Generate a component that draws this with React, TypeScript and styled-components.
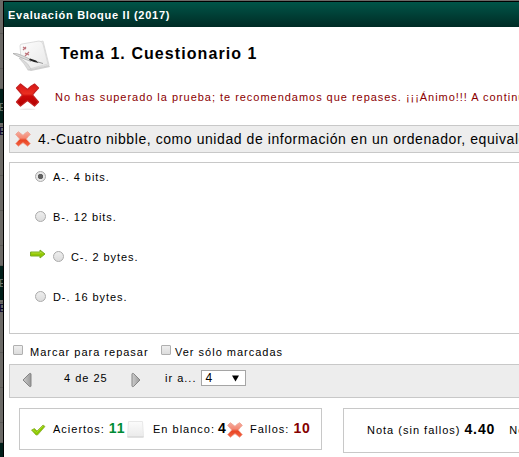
import React, { useState } from "react";
import styled, { createGlobalStyle } from "styled-components";

const GlobalStyle = createGlobalStyle`
  * { box-sizing: border-box; }
  html, body { margin: 0; padding: 0; overflow: hidden; }
  body { font-family: "Liberation Sans", Arial, sans-serif; font-size: 11px; letter-spacing: 1px; color: #000; }
`;

const Screen = styled.div`
  width: 519px;
  height: 457px;
  display: flex;
  padding-top: 1px;
  background: #6b6966;
  overflow: hidden;
`;

const Backdrop = styled.div`
  flex: 0 0 3px;
  display: flex;
  flex-direction: column;
  overflow: hidden;
`;

const BackdropBlock = styled.div<{ $h: number; $dark?: boolean }>`
  flex: 0 0 ${(p) => p.$h}px;
  background: ${(p) => (p.$dark ? "#001f1a" : "#6b6966")};
  border-bottom: ${(p) => (p.$dark ? "0" : "1px solid #5b5a57")};
`;

const BackdropLetter = styled.div<{ $light?: boolean }>`
  flex: 0 0 11px;
  font-size: 11px;
  line-height: 11px;
  text-indent: -1px;
  background: ${(p) => (p.$light ? "#001f1a" : "#6b6966")};
  color: ${(p) => (p.$light ? "#73786f" : "#00002b")};
`;

const Dialog = styled.main`
  flex: 1;
  min-width: 0;
  border-left: 1px solid #000;
  border-top: 1px solid #000;
  background: #fff;
  overflow: hidden;
  white-space: nowrap;
`;

const TitleBar = styled.header`
  height: 25px;
  padding: 0 4px;
  line-height: 27px;
  font-weight: bold;
  letter-spacing: 0.73px;
  color: #fff;
  background: linear-gradient(#005548, #002b25);
`;

const Heading = styled.div`
  height: 54px;
  padding: 13px 0 0 8px;
  display: flex;
  gap: 10px;
`;

const Title = styled.h1`
  margin: 5px 0 0;
  font-size: 16px;
  line-height: 18px;
  letter-spacing: 1.07px;
`;

const Message = styled.div`
  height: 44px;
  padding: 1px 0 0 10px;
  display: flex;
  gap: 14px;
  color: #8b0000;
  line-height: 31px;
  letter-spacing: 0.97px;
`;

const Question = styled.section`
  height: 28px;
  width: 600px;
  margin-left: 5px;
  padding-left: 5px;
  display: flex;
  align-items: center;
  gap: 7px;
  border: 1px solid #c8c8c8;
  background: #ededed;
  font-size: 14px;
  letter-spacing: 0.57px;
  line-height: 26px;
`;

const Answers = styled.section`
  height: 172px;
  width: 600px;
  margin: 9px 0 0 5px;
  padding: 7px 0 0 24px;
  border: 1px solid #c8c8c8;
`;

const Answer = styled.label<{ $marked?: boolean }>`
  height: 40px;
  display: flex;
  align-items: flex-start;
  margin-left: ${(p) => (p.$marked ? "-4px" : "0")};
  line-height: 15px;
  letter-spacing: 0.93px;
`;

const Radio = styled.input`
  appearance: none;
  width: 11px;
  height: 11px;
  margin: 1px 7px 0 1px;
  border: 1px solid #aaa;
  border-radius: 50%;
  background: linear-gradient(#eee, #dcdcdc);
  &:checked { background: radial-gradient(circle, #606060 0 2.3px, #e7e7e7 3px); }
`;

const Options = styled.div`
  height: 30px;
  padding: 11px 0 0 9px;
  display: flex;
  line-height: 15px;
`;

const CheckLabel = styled.label<{ $gap: number; $w: number }>`
  display: flex;
  gap: ${(p) => p.$gap}px;
  flex: 0 0 ${(p) => p.$w}px;
`;

const Check = styled.input`
  appearance: none;
  width: 10px;
  height: 10px;
  margin: 0;
  border: 1px solid #b0b0b0;
  border-radius: 1px;
  background: linear-gradient(#eee, #dcdcdc);
  &:checked { background: #666; }
`;

const Pager = styled.nav`
  height: 34px;
  width: 600px;
  margin-left: 5px;
  padding: 5px 0 0 12px;
  display: flex;
  border: 1px solid #c8c8c8;
  background: #ededed;
  line-height: 17px;
`;

const PageButton = styled.button`
  width: 10px;
  height: 16px;
  margin-top: 2px;
  padding: 0;
  border: 0;
  background: none;
  display: block;
`;

const PageCount = styled.span`
  width: 99px;
  padding-left: 32px;
`;

const Jump = styled.div`
  display: flex;
  margin-left: 24px;
  gap: 5px;
`;

const JumpBox = styled.button`
  width: 45px;
  height: 16px;
  padding: 0 6px 0 3px;
  display: flex;
  align-items: center;
  justify-content: space-between;
  border: 1px solid #a5a5a5;
  background: #fff;
  font: 12px "Liberation Sans", Arial, sans-serif;
  color: #000;
`;

const Results = styled.footer`
  display: flex;
  align-items: flex-start;
  gap: 21px;
  padding: 10px 0 0 15px;
`;

const ScoreBox = styled.div`
  width: 303px;
  height: 42px;
  padding: 12px 0 0 11px;
  display: flex;
  flex: none;
  border: 1px solid #c8c8c8;
  line-height: 17px;
`;

const GradeBox = styled.div`
  width: 300px;
  height: 45px;
  padding: 12px 0 0 23px;
  display: flex;
  flex: none;
  gap: 14px;
  border: 1px solid #c8c8c8;
  line-height: 18px;
`;

const Stat = styled.div<{ $w: number; $gap: number }>`
  width: ${(p) => p.$w}px;
  display: flex;
  flex: none;
  gap: ${(p) => p.$gap}px;
`;

const Value = styled.b<{ $color?: string; $left?: number }>`
  color: ${(p) => p.$color ?? "#000"};
  font-size: 14px;
  line-height: 15px;
  letter-spacing: 0.9px;
  margin-left: ${(p) => p.$left ?? 4}px;
`;

const Icon = styled.svg<{ $top?: number }>`
  display: block;
  flex: none;
  margin-top: ${(p) => p.$top ?? 0}px;
`;

const PapersIcon = () => (
  <Icon width="38" height="32" viewBox="0 0 38 32">
    <defs>
      <linearGradient id="sheet" x2="1" y2="1">
        <stop stopColor="#fdfdfd" /><stop offset="1" stopColor="#e8e8e8" />
      </linearGradient>
    </defs>
    <path d="M15 30 37 25l1 2-19 4z" fill="#cfcfcf" />
    <path d="M13 6 31 1l6 24-19 4z" fill="#f4f4f4" stroke="#cdcdcd" strokeWidth=".7" />
    <path d="M8 6q0-2 2-2l17-3q3 0 4 3l5 20-19 5q-1-5-8-10z" fill="url(#sheet)" stroke="#d0d0d0" strokeWidth=".7" />
    <path d="m11 7 3 2m0-2-3 3m2 3 4 2m0-3-4 4" stroke="#bd737b" strokeWidth="1.200" />
    <path d="M7 18q5 5 9 12l3-1q-3-6-8-9z" fill="#dcdcdc" stroke="#bbb" strokeWidth=".5" />
    <path d="M1 13.500q4-.5 9 2l10 4.500-1 1.500-9-3.500Q5 16 1 13.500z" fill="#ddd" stroke="#999" strokeWidth=".6" />
    <path d="m18 18.500 6 2 3 2.500-5-1-5-2z" fill="#222" />
    <path d="m26 22 5 1.500" stroke="#999" />
  </Icon>
);

const CROSS = "M1 5 5 1l7 5.500Q15 3 19 1l4 4q-3 3-6 7l6 7-4 4-7-5.500-7 5.500-4-4 6-7z";

const BigCross = () => (
  <Icon width="27" height="29" viewBox="0 0 27 29">
    <defs>
      <linearGradient id="red" x2="0" y2="1">
        <stop stopColor="#d91616" /><stop offset=".45" stopColor="#ea2e20" />
        <stop offset=".55" stopColor="#cc0909" /><stop offset="1" stopColor="#b00000" />
      </linearGradient>
    </defs>
    <ellipse cx="13.500" cy="27.300" rx="8" ry=".8" fill="#e9e9e9" />
    <path d={CROSS} transform="translate(1.500 1)" fill="url(#red)" stroke="#c42020" strokeWidth="1.200" strokeLinejoin="round" />
  </Icon>
);

const SmallCross = ({ top = 0 }: { top?: number }) => (
  <Icon $top={top} width="16" height="16" viewBox="0 0 24 24">
    <defs>
      <linearGradient id="coral" x2="0" y2="1">
        <stop stopColor="#f5ac9e" /><stop offset=".43" stopColor="#f48873" />
        <stop offset=".58" stopColor="#e84423" /><stop offset="1" stopColor="#f46545" />
      </linearGradient>
    </defs>
    <path d={CROSS} fill="url(#coral)" stroke="#efa191" strokeWidth="1.300" strokeLinejoin="round" />
  </Icon>
);

const ArrowIcon = () => (
  <Icon width="16" height="10" viewBox="0 0 16 10">
    <path d="M.5 3h9.500V1l5 4-5 4V7H.5z" fill="#93c800" stroke="#79ac25" strokeLinejoin="round" />
    <path d="M1.500 4h9V3l2 1.500" fill="none" stroke="#bde34f" strokeWidth=".7" />
  </Icon>
);

const TickIcon = () => (
  <Icon $top={2} width="15" height="14" viewBox="0 0 15 14">
    <path d="m.5 7 3-1.500L6 8l6-6 2 1.500L6.500 12H5z" fill="#8ac800" stroke="#8eaf37" strokeWidth=".8" />
    <path d="m2 7 3.500 2.500L12 3" fill="none" stroke="#a9dc28" />
  </Icon>
);

const BlankIcon = () => (
  <Icon width="17" height="17" viewBox="0 0 17 17">
    <defs><linearGradient id="blank" x2="0" y2="1"><stop stopColor="#fcfcfc" /><stop offset="1" stopColor="#eaeaea" /></linearGradient></defs>
    <path d="M1.500.5h14l1 15.500H.5z" fill="url(#blank)" stroke="#e8e8e8" />
    <path d="M.5 16h16" stroke="#cfcfcf" />
  </Icon>
);

const Triangle = ({ back = false }: { back?: boolean }) => (
  <Icon width="10" height="16" viewBox="0 0 10 16">
    <defs><linearGradient id="steel"><stop stopColor="#ccc" /><stop offset="1" stopColor="#999" /></linearGradient></defs>
    <path d={back ? "M7.500 1.500Q9 1 9 2v12q0 1-1.500.5L1 8z" : "M2.500 1.500Q1 1 1 2v12q0 1 1.500.5L9 8z"}
      fill="url(#steel)" stroke="#858585" strokeLinejoin="round" />
  </Icon>
);

const answers = ["A-. 4 bits.", "B-. 12 bits.", "C-. 2 bytes.", "D-. 16 bytes."];

const Arrow = styled.span`
  display: block;
  width: 22px;
  flex: none;
  margin-top: -1px;
`;

const App: React.FC = () => {
  const [selected, setSelected] = useState(0);
  return (
    <>
      <GlobalStyle />
      <Screen>
        <Backdrop aria-hidden="true">
          <BackdropBlock $h={33} />
          <BackdropBlock $h={35} />
          <BackdropBlock $h={20} />
          <BackdropBlock $h={13} $dark />
          <BackdropLetter $light>E</BackdropLetter>
          <BackdropBlock $h={10} $dark />
          <BackdropBlock $h={3} />
          <BackdropLetter>E</BackdropLetter>
          <BackdropBlock $h={39} />
          <BackdropBlock $h={35} />
          <BackdropBlock $h={35} />
          <BackdropBlock $h={20} />
          <BackdropBlock $h={12} $dark />
          <BackdropLetter $light>E</BackdropLetter>
          <BackdropBlock $h={11} $dark />
          <BackdropBlock $h={3} />
          <BackdropLetter>E</BackdropLetter>
          <BackdropBlock $h={39} />
          <BackdropBlock $h={35} />
          <BackdropBlock $h={35} />
          <BackdropBlock $h={20} />
          <BackdropBlock $h={14} $dark />
        </Backdrop>
        <Dialog>
          <TitleBar>Evaluación Bloque II (2017)</TitleBar>
          <Heading><PapersIcon /><Title>Tema 1. Cuestionario 1</Title></Heading>
          <Message><BigCross /><span>No has superado la prueba; te recomendamos que repases. ¡¡¡Ánimo!!! A continuación</span></Message>
          <Question><SmallCross /><span>4.-Cuatro nibble, como unidad de información en un ordenador, equivale</span></Question>
          <Answers>
            {answers.map((text, i) => (
              <Answer key={text} $marked={i === 2}>
                {i === 2 && <Arrow><ArrowIcon /></Arrow>}
                <Radio type="radio" name="answer" checked={selected === i} onChange={() => setSelected(i)} />
                {text}
              </Answer>
            ))}
          </Answers>
          <Options>
            <CheckLabel $w={148} $gap={7}><Check type="checkbox" />Marcar para repasar</CheckLabel>
            <CheckLabel $w={140} $gap={4}><Check type="checkbox" />Ver sólo marcadas</CheckLabel>
          </Options>
          <Pager>
            <PageButton aria-label="Anterior"><Triangle back /></PageButton>
            <PageCount>4 de 25</PageCount>
            <PageButton aria-label="Siguiente"><Triangle /></PageButton>
            <Jump>
              ir a...
              <JumpBox>4<Icon width="7" height="7" viewBox="0 0 7 7"><path d="M0 .5h7l-3.500 6z" /></Icon></JumpBox>
            </Jump>
          </Pager>
          <Results>
            <ScoreBox>
              <Stat $w={96} $gap={7}><TickIcon /><span>Aciertos:<Value $color="#008c35">11</Value></span></Stat>
              <Stat $w={100} $gap={9}><BlankIcon /><span>En blanco:<Value $left={3}>4</Value></span></Stat>
              <Stat $w={86} $gap={7}><SmallCross top={1} /><span>Fallos:<Value $color="#850000" $left={4}>10</Value></span></Stat>
            </ScoreBox>
            <GradeBox>
              <span>Nota (sin fallos)<Value>4.40</Value></span>
              <span>Nota (con fallos)</span>
            </GradeBox>
          </Results>
        </Dialog>
      </Screen>
    </>
  );
};

export default App;
